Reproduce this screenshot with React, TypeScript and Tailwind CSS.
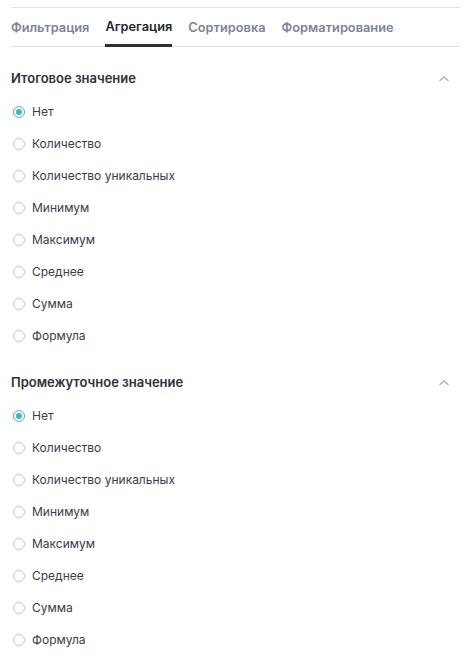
import React from "react";

const items = [
  "Нет",
  "Количество",
  "Количество уникальных",
  "Минимум",
  "Максимум",
  "Среднее",
  "Сумма",
  "Формула",
];

function Radio({ checked }: { checked: boolean }) {
  return checked ? (
    <span className="w-[12px] h-[12px] rounded-full border border-[#3fb8b8] flex items-center justify-center shrink-0">
      <span className="w-[6px] h-[6px] rounded-full bg-[#3fb8b8]" />
    </span>
  ) : (
    <span className="w-[12px] h-[12px] rounded-full border border-[#c3c6d1] shrink-0" />
  );
}

function Section({ title, first }: { title: string; first?: boolean }) {
  return (
    <div className={first ? "pt-[17px]" : "pt-[16px]"}>
      <div className="h-[30px] flex items-center justify-between">
        <span className="text-[13px] font-semibold text-[#2f3136]">{title}</span>
        <svg width="12" height="8" viewBox="0 0 12 8" className="mr-[10px]">
          <path d="M1.5 6 L6 1.8 L10.5 6" fill="none" stroke="#a9aebb" strokeWidth="1.3" />
        </svg>
      </div>
      <div className="mt-[2px] flex flex-col">
        {items.map((it, i) => (
          <div key={it} className="h-[32px] flex items-center gap-[7px] pl-[2px]">
            <Radio checked={i === 0} />
            <span className="text-[12px] text-[#3a3d44]">{it}</span>
          </div>
        ))}
      </div>
    </div>
  );
}

export default function App() {
  return (
    <div className="w-[471px] h-[663px] bg-white overflow-hidden" style={{ fontFamily: "Inter, 'Noto Sans', sans-serif" }}>
      <div className="mx-[11px] mt-[7px] border-t border-[#e2e3e8]">
        <div className="flex gap-[16px] h-[39px] border-b border-[#dcdee4]">
          {["Фильтрация", "Агрегация", "Сортировка", "Форматирование"].map((t, i) => (
            <div
              key={t}
              className={
                i === 1
                  ? "flex items-center text-[12.8px] font-semibold text-[#25272c] border-b-[3px] border-[#2c2e33] -mb-[1px] pt-[1px]"
                  : "flex items-center text-[12.8px] font-semibold text-[#7d8494] pt-[1px]"
              }
            >
              {t}
            </div>
          ))}
        </div>
        <Section title="Итоговое значение" first />
        <Section title="Промежуточное значение" />
      </div>
    </div>
  );
}
